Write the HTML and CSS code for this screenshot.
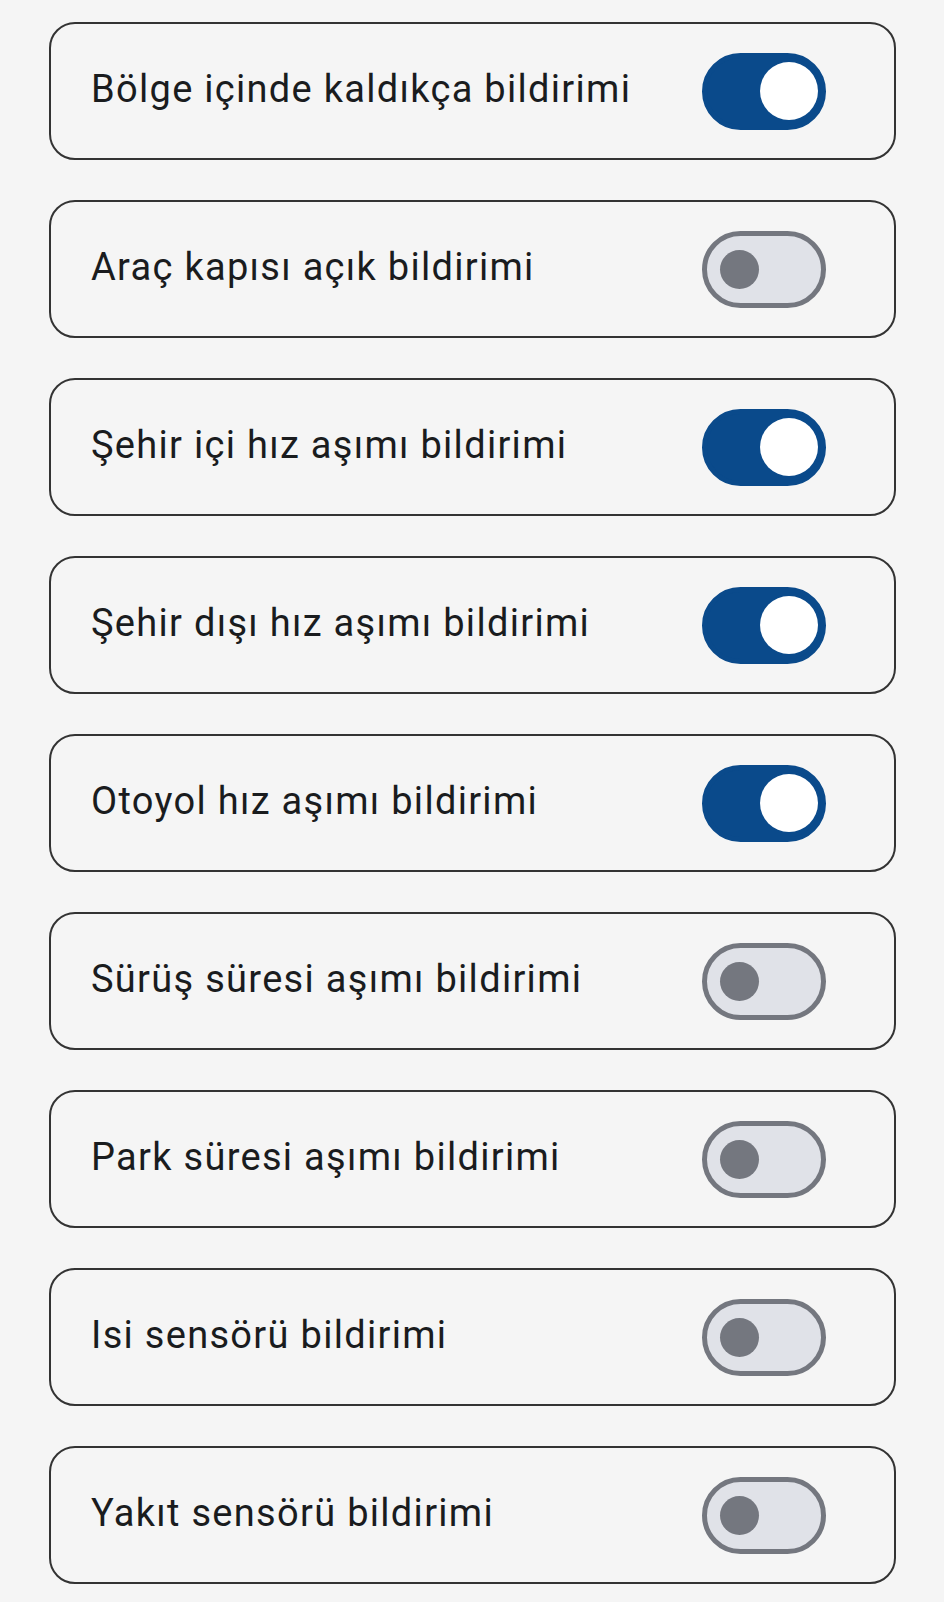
FILE: index.html
```html
<!DOCTYPE html>
<html lang="tr">
<head>
  <meta charset="UTF-8" />
  <meta name="viewport" content="width=device-width, initial-scale=1.0"/>
  <title>Bildirim Ayarları</title>
  <link rel="stylesheet" href="styles.css">
</head>
<body>
  <div class="list">
    <label class="item">
      <span class="item-text">Bölge içinde kaldıkça bildirimi</span>
      <span class="switch on"><span class="thumb"></span></span>
    </label>
    <label class="item">
      <span class="item-text">Araç kapısı açık bildirimi</span>
      <span class="switch"><span class="thumb"></span></span>
    </label>
    <label class="item">
      <span class="item-text">Şehir içi hız aşımı bildirimi</span>
      <span class="switch on"><span class="thumb"></span></span>
    </label>
    <label class="item">
      <span class="item-text">Şehir dışı hız aşımı bildirimi</span>
      <span class="switch on"><span class="thumb"></span></span>
    </label>
    <label class="item">
      <span class="item-text">Otoyol hız aşımı bildirimi</span>
      <span class="switch on"><span class="thumb"></span></span>
    </label>
    <label class="item">
      <span class="item-text">Sürüş süresi aşımı bildirimi</span>
      <span class="switch"><span class="thumb"></span></span>
    </label>
    <label class="item">
      <span class="item-text">Park süresi aşımı bildirimi</span>
      <span class="switch"><span class="thumb"></span></span>
    </label>
    <label class="item">
      <span class="item-text">Isi sensörü bildirimi</span>
      <span class="switch"><span class="thumb"></span></span>
    </label>
    <label class="item">
      <span class="item-text">Yakıt sensörü bildirimi</span>
      <span class="switch"><span class="thumb"></span></span>
    </label>
  </div>
</body>
</html>
```

FILE: styles.css
```css
* {
  margin: 0;
  padding: 0;
  box-sizing: border-box;
  font-family: Roboto, "Noto Sans", Arial, sans-serif;
}
body {
  background-color: #f5f5f5;
}
.list {
  display: flex;
  flex-direction: column;
  gap: 40px;
  padding: 22px 48px 0 49px;
}
.item {
  display: flex;
  align-items: center;
  justify-content: space-between;
  height: 138px;
  padding: 0 68px 0 40px;
  border: 2px solid #333333;
  border-radius: 26px;
  background: #f5f5f5;
}
.item-text {
  font-size: 38px;
  letter-spacing: 1.3px;
  line-height: 1;
  padding-bottom: 4px;
  color: #1a1c1e;
}
.switch {
  display: flex;
  align-items: center;
  width: 124px;
  height: 77px;
  border-radius: 39px;
  border: 5px solid #74777f;
  background: #e0e2e8;
  padding-left: 13px;
}
.switch .thumb {
  width: 39px;
  height: 39px;
  border-radius: 50%;
  background: #74777f;
}
.switch.on {
  background: #0a4a8b;
  border-color: #0a4a8b;
  padding-left: 53px;
}
.switch.on .thumb {
  width: 58px;
  height: 58px;
  background: #ffffff;
}
```
